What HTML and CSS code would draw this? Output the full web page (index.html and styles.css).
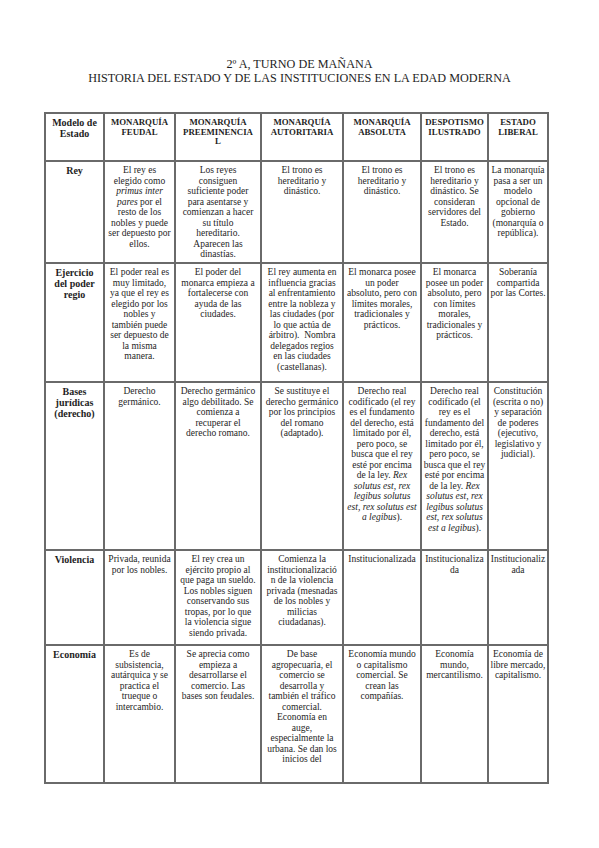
FILE: index.html
```html
<!DOCTYPE html>
<html lang="es">
<head>
<meta charset="utf-8">
<title>Historia del Estado</title>
<link rel="stylesheet" href="styles.css">
</head>
<body>
<div class="page">
  <div class="title">2º A, TURNO DE MAÑANA<br>HISTORIA DEL ESTADO Y DE LAS INSTITUCIONES EN LA EDAD MODERNA</div>
  <table class="grid">
    <colgroup>
      <col class="c1"><col class="c2"><col class="c3"><col class="c4"><col class="c5"><col class="c6"><col class="c7">
    </colgroup>
    <tr class="r-head">
      <td class="lbl">Modelo de<br>Estado</td>
      <td class="hd">MONARQUÍA<br>FEUDAL</td>
      <td class="hd">MONARQUÍA<br>PREEMINENCIA<br>L</td>
      <td class="hd">MONARQUÍA<br>AUTORITARIA</td>
      <td class="hd">MONARQUÍA<br>ABSOLUTA</td>
      <td class="hd">DESPOTISMO<br>ILUSTRADO</td>
      <td class="hd">ESTADO<br>LIBERAL</td>
    </tr>
    <tr class="r-rey">
      <td class="lbl">Rey</td>
      <td>El rey es<br>elegido como<br><i>primus inter</i><br><i>pares</i> por el<br>resto de los<br>nobles y puede<br>ser depuesto por<br>ellos.</td>
      <td>Los reyes<br>consiguen<br>suficiente poder<br>para asentarse y<br>comienzan a hacer<br>su título<br>hereditario.<br>Aparecen las<br>dinastías.</td>
      <td>El trono es<br>hereditario y<br>dinástico.</td>
      <td>El trono es<br>hereditario y<br>dinástico.</td>
      <td>El trono es<br>hereditario y<br>dinástico. Se<br>consideran<br>servidores del<br>Estado.</td>
      <td>La monarquía<br>pasa a ser un<br>modelo<br>opcional de<br>gobierno<br>(monarquía o<br>república).</td>
    </tr>
    <tr class="r-ejer">
      <td class="lbl">Ejercicio<br>del poder<br>regio</td>
      <td>El poder real es<br>muy limitado,<br>ya que el rey es<br>elegido por los<br>nobles y<br>también puede<br>ser depuesto de<br>la misma<br>manera.</td>
      <td>El poder del<br>monarca empieza a<br>fortalecerse con<br>ayuda de las<br>ciudades.</td>
      <td>El rey aumenta en<br>influencia gracias<br>al enfrentamiento<br>entre la nobleza y<br>las ciudades (por<br>lo que actúa de<br>árbitro).&nbsp; Nombra<br>delegados regios<br>en las ciudades<br>(castellanas).</td>
      <td>El monarca posee<br>un poder<br>absoluto, pero con<br>límites morales,<br>tradicionales y<br>prácticos.</td>
      <td>El monarca<br>posee un poder<br>absoluto, pero<br>con límites<br>morales,<br>tradicionales y<br>prácticos.</td>
      <td>Soberanía<br>compartida<br>por las Cortes.</td>
    </tr>
    <tr class="r-bases">
      <td class="lbl">Bases<br>jurídicas<br>(derecho)</td>
      <td>Derecho<br>germánico.</td>
      <td>Derecho germánico<br>algo debilitado. Se<br>comienza a<br>recuperar el<br>derecho romano.</td>
      <td>Se sustituye el<br>derecho germánico<br>por los principios<br>del romano<br>(adaptado).</td>
      <td>Derecho real<br>codificado (el rey<br>es el fundamento<br>del derecho, está<br>limitado por él,<br>pero poco, se<br>busca que el rey<br>esté por encima<br>de la ley. <i>Rex</i><br><i>solutus est, rex</i><br><i>legibus solutus</i><br><i>est, rex solutus est</i><br><i>a legibus</i>).</td>
      <td>Derecho real<br>codificado (el<br>rey es el<br>fundamento del<br>derecho, está<br>limitado por él,<br>pero poco, se<br>busca que el rey<br>esté por encima<br>de la ley. <i>Rex</i><br><i>solutus est, rex</i><br><i>legibus solutus</i><br><i>est, rex solutus</i><br><i>est a legibus</i>).</td>
      <td>Constitución<br>(escrita o no)<br>y separación<br>de poderes<br>(ejecutivo,<br>legislativo y<br>judicial).</td>
    </tr>
    <tr class="r-viol">
      <td class="lbl">Violencia</td>
      <td>Privada, reunida<br>por los nobles.</td>
      <td>El rey crea un<br>ejército propio al<br>que paga un sueldo.<br>Los nobles siguen<br>conservando sus<br>tropas, por lo que<br>la violencia sigue<br>siendo privada.</td>
      <td>Comienza la<br>institucionalizació<br>n de la violencia<br>privada (mesnadas<br>de los nobles y<br>milicias<br>ciudadanas).</td>
      <td>Institucionalizada</td>
      <td>Institucionaliza<br>da</td>
      <td>Institucionaliz<br>ada</td>
    </tr>
    <tr class="r-eco">
      <td class="lbl">Economía</td>
      <td>Es de<br>subsistencia,<br>autárquica y se<br>practica el<br>trueque o<br>intercambio.</td>
      <td>Se aprecia como<br>empieza a<br>desarrollarse el<br>comercio. Las<br>bases son feudales.</td>
      <td>De base<br>agropecuaria, el<br>comercio se<br>desarrolla y<br>también el tráfico<br>comercial.<br>Economía en<br>auge,<br>especialmente la<br>urbana. Se dan los<br>inicios del</td>
      <td>Economía mundo<br>o capitalismo<br>comercial. Se<br>crean las<br>compañías.</td>
      <td>Economía<br>mundo,<br>mercantilismo.</td>
      <td>Economía de<br>libre mercado,<br>capitalismo.</td>
    </tr>
  </table>
</div>
</body>
</html>
```
FILE: styles.css
```css
html, body {
  margin: 0;
  padding: 0;
  background: #ffffff;
}
body {
  font-family: "Liberation Serif", "Times New Roman", serif;
  color: #1e1e1e;
}
.page {
  width: 599px;
  padding-top: 57px;
}
.title {
  text-align: center;
  font-size: 12.2px;
  line-height: 14px;
}
.grid {
  border-collapse: collapse;
  table-layout: fixed;
  width: 503px;
  margin: 27px 0 0 44px;
}
.c1 { width: 59px; }
.c2 { width: 71px; }
.c3 { width: 86px; }
.c4 { width: 82px; }
.c5 { width: 78px; }
.c6 { width: 67px; }
.c7 { width: 60px; }
.grid td {
  border: 2px solid #6a6a6a;
  vertical-align: top;
  text-align: center;
  padding: 3px 1px 2px;
  font-size: 9.5px;
  line-height: 10.5px;
  white-space: nowrap;
}
.grid td.hd {
  font-weight: bold;
  font-size: 8.8px;
  line-height: 9.5px;
  padding-top: 4px;
}
.grid td.lbl {
  font-weight: bold;
  font-size: 10px;
  line-height: 11px;
}
.r-head { height: 48px; }
.r-rey { height: 102px; }
.r-ejer { height: 119px; }
.r-bases { height: 168px; }
.r-viol { height: 95px; }
.r-eco { height: 138px; }
```
